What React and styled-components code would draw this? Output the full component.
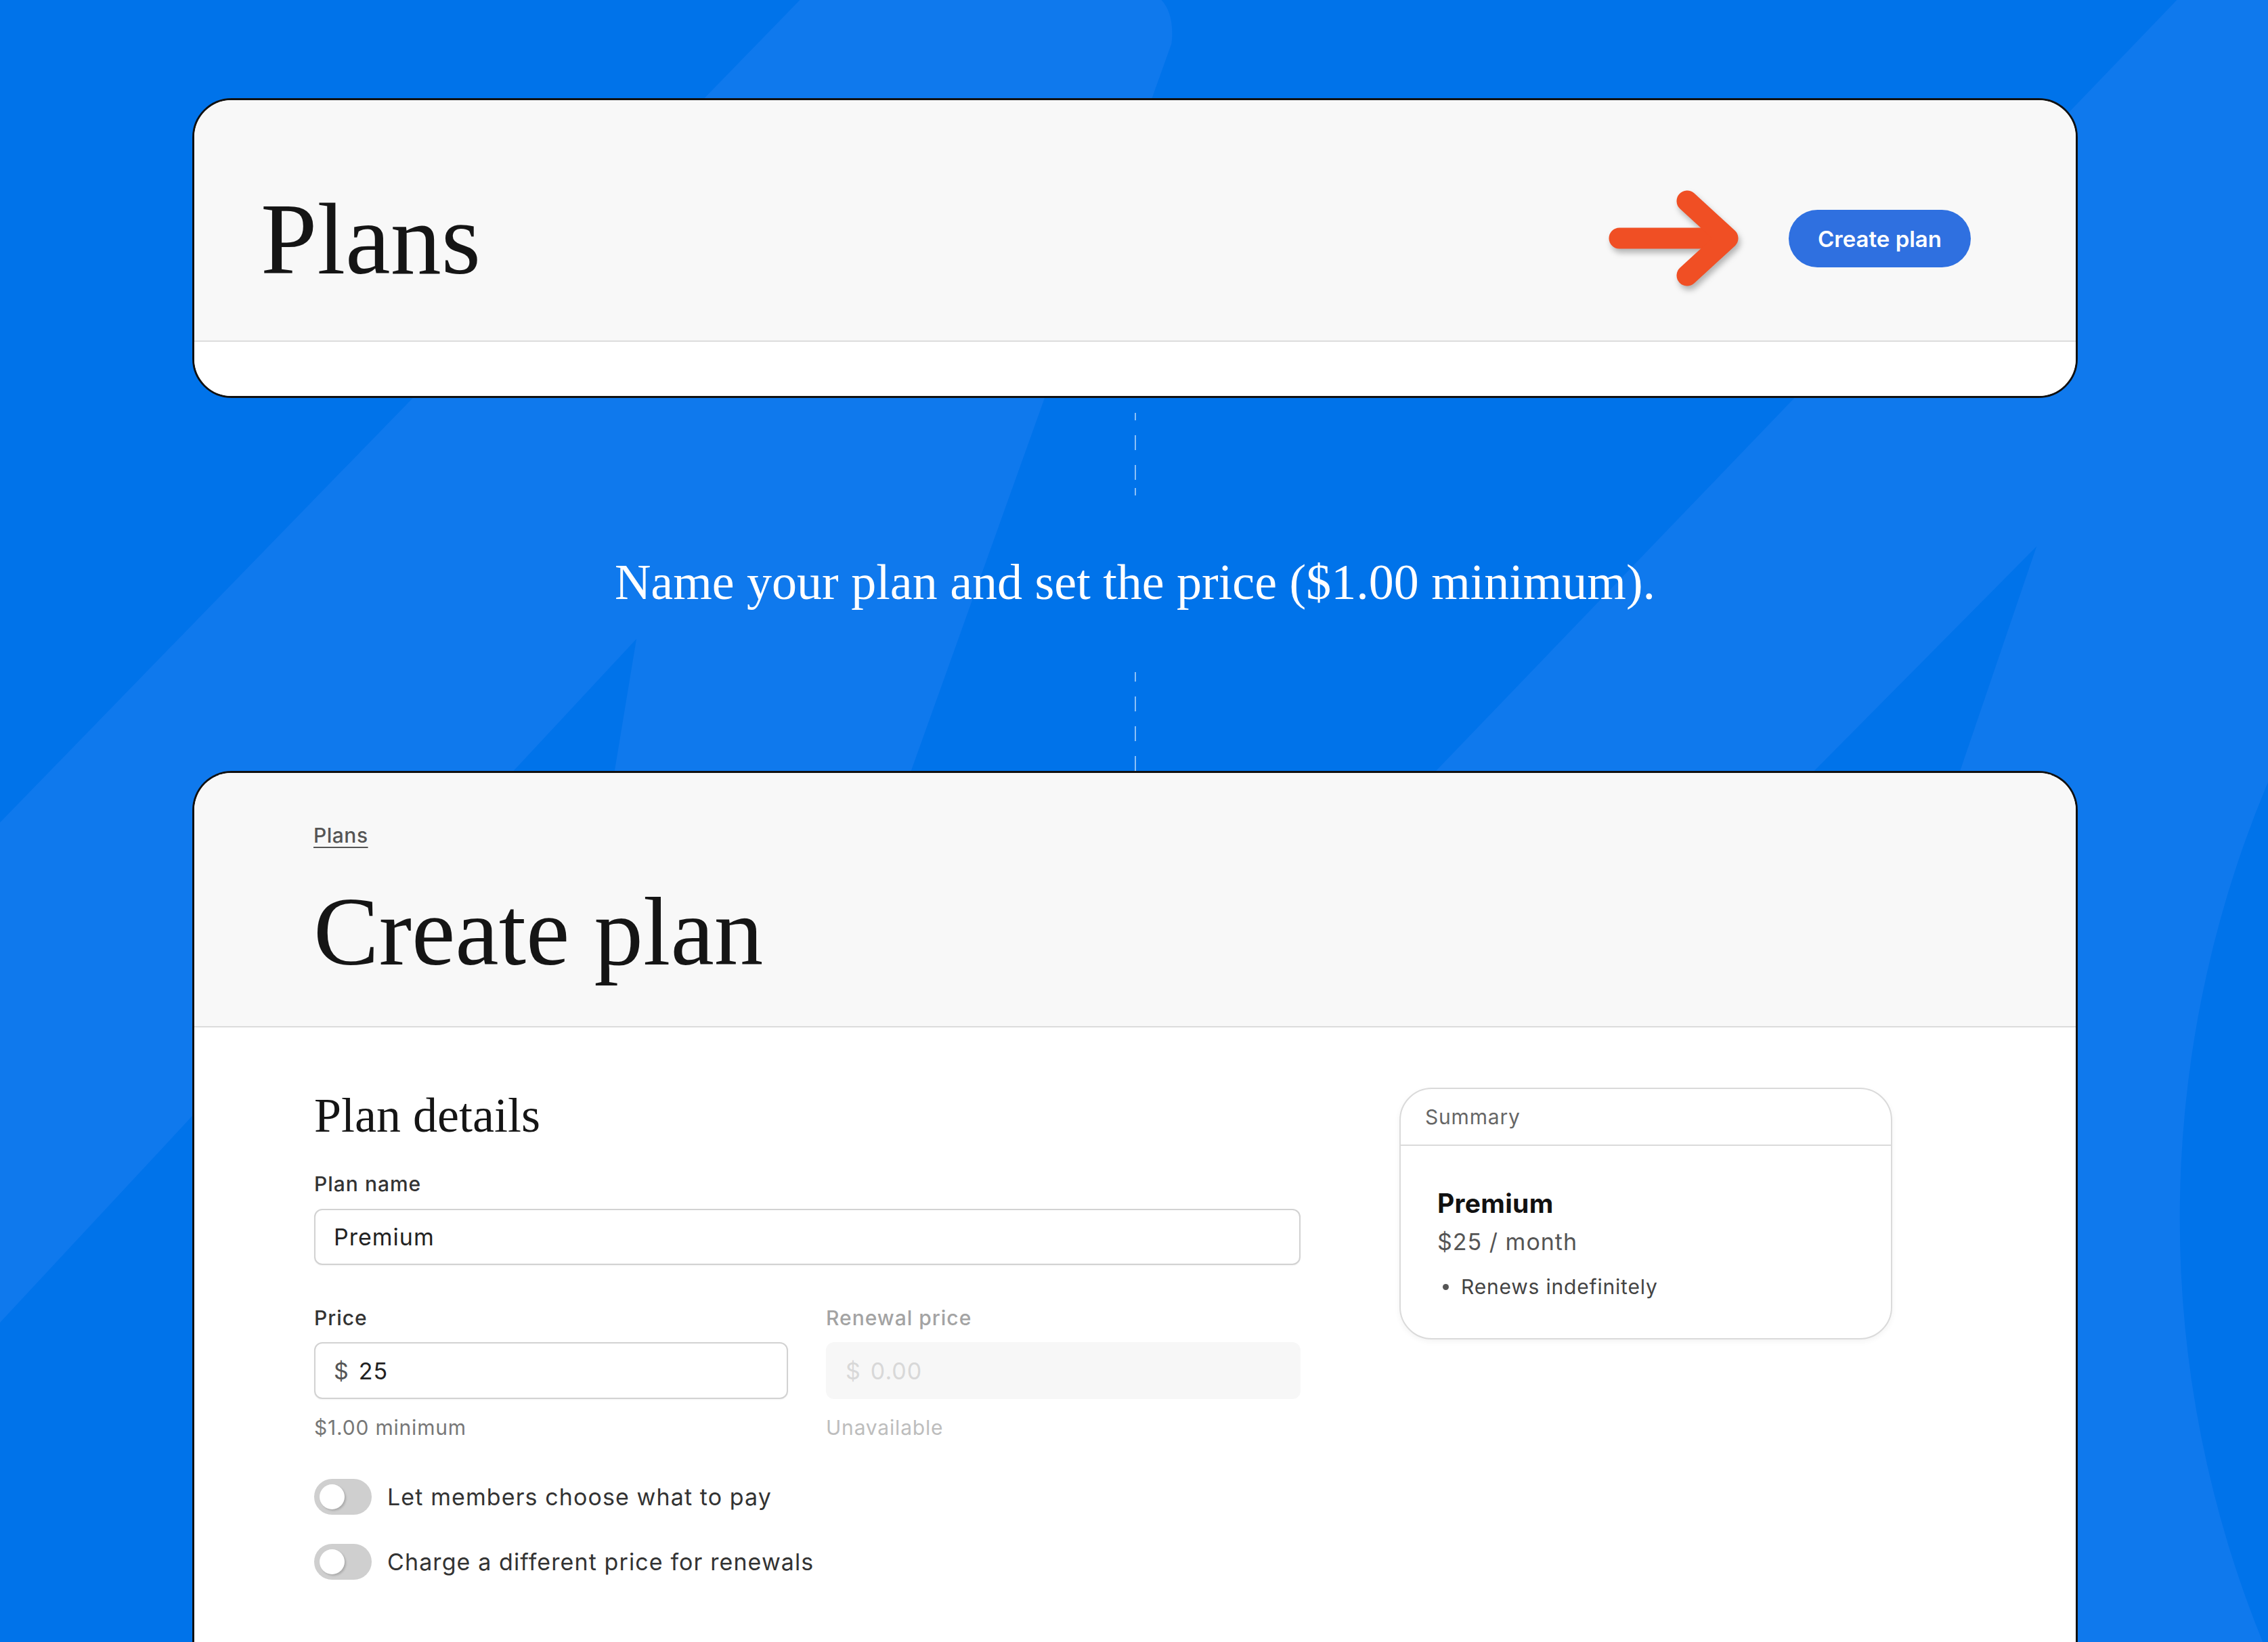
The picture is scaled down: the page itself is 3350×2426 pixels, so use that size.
import React from 'react'
import styled, { createGlobalStyle } from 'styled-components'

const SANS = `Inter, "Liberation Sans", "Noto Sans", sans-serif`
const SERIF = `"Liberation Serif", "DejaVu Serif", serif`

const GlobalStyle = createGlobalStyle`
  html, body {
    margin: 0;
    padding: 0;
  }
  body {
    width: 3350px;
    height: 2426px;
    overflow: hidden;
    background: #0073ea;
  }
  * {
    box-sizing: border-box;
  }
`

const Page = styled.div`
  position: relative;
  width: 3350px;
  height: 2426px;
  overflow: hidden;
  background: #0073ea;
`

const Backdrop = styled.svg`
  position: absolute;
  inset: 0;
  width: 100%;
  height: 100%;
`

const Stage = styled.div`
  position: relative;
  display: flex;
  flex-direction: column;
  align-items: flex-start;
  padding: 145px 0 0 284px;
`

const Card = styled.section`
  width: 2785px;
  background: #fff;
  border: 3px solid #111;
  border-radius: 58px;
  overflow: hidden;
  ${p => p.$open && `
    border-bottom: none;
    border-radius: 58px 58px 0 0;
    height: 1400px;
  `}
`

/* ---------- top card ---------- */

const TopHeader = styled.header`
  height: 357px;
  padding: 54px 155px 0 98px;
  display: flex;
  align-items: center;
  background: #f8f8f8;
  border-bottom: 2px solid #dcdcdc;
`

const PageTitle = styled.h1`
  margin: 0;
  flex: 1;
  font-family: ${SERIF};
  font-weight: 400;
  font-size: ${p => p.$size || 150}px;
  line-height: 1;
  color: #151515;
`

const TopFooter = styled.div`
  height: 80px;
  background: #fff;
`

const Pointer = styled.svg`
  width: 210px;
  height: 160px;
  margin-right: 64px;
  filter: drop-shadow(3px 6px 4px rgba(0, 0, 0, 0.28));
`

const PrimaryButton = styled.button`
  height: 85px;
  padding: 0 43px;
  border: none;
  border-radius: 43px;
  background: #2f70e0;
  color: #fff;
  font-family: ${SANS};
  font-weight: 600;
  font-size: 33px;
  cursor: pointer;
`

/* ---------- connector ---------- */

const Connector = styled.div`
  align-self: stretch;
  width: 2785px;
  height: 551px;
  display: flex;
  flex-direction: column;
  align-items: center;
`

const Dashes = styled.div`
  width: 2px;
  margin-top: ${p => p.$top}px;
  height: ${p => p.$h}px;
  background: repeating-linear-gradient(
    to bottom,
    rgba(255, 255, 255, 0.55) 0 22px,
    transparent 22px 44px
  );
  background-position: 0 ${p => p.$shift}px;
`

const Caption = styled.p`
  margin: 90px 0 0;
  font-family: ${SERIF};
  font-size: 74px;
  line-height: 76px;
  color: #fff;
  white-space: nowrap;
`

/* ---------- create plan card ---------- */

const EditorHeader = styled.header`
  padding: 74px 176px 67px;
  background: #f8f8f8;
  border-bottom: 2px solid #dcdcdc;
`

const Crumb = styled.a`
  display: inline-block;
  font-family: ${SANS};
  font-weight: 500;
  font-size: 30px;
  line-height: 36px;
  letter-spacing: 0.5px;
  color: #555;
  text-decoration: underline;
  text-decoration-thickness: 2px;
  text-underline-offset: 6px;
`

const EditorTitle = styled(PageTitle)`
  margin-top: 52px;
`

const EditorBody = styled.div`
  display: grid;
  grid-template-columns: 1457px 728px;
  column-gap: 146px;
  padding: 95px 0 0 177px;
  align-items: start;
`

const Form = styled.div`
  display: flex;
  flex-direction: column;
`

const SectionTitle = styled.h2`
  margin: 0;
  font-family: ${SERIF};
  font-weight: 400;
  font-size: 72px;
  line-height: 70px;
  color: #151515;
`

const Field = styled.div`
  display: flex;
  flex-direction: column;
  margin-top: ${p => p.$top || 0}px;
`

const Label = styled.label`
  font-family: ${SANS};
  font-weight: 500;
  font-size: 30px;
  line-height: 36px;
  letter-spacing: 1px;
  color: ${p => (p.$muted ? '#a3a3a3' : '#333')};
`

const InputBox = styled.div`
  margin-top: ${p => p.$gap || 19}px;
  height: ${p => p.$h || 83}px;
  display: flex;
  align-items: center;
  gap: 14px;
  padding: 0 27px;
  border-radius: 12px;
  border: 2px solid ${p => (p.$disabled ? '#f7f7f7' : '#d2d2d2')};
  background: ${p => (p.$disabled ? '#f7f7f7' : '#fff')};
  box-shadow: ${p => (p.$disabled ? 'none' : '0 1px 2px rgba(0,0,0,0.05)')};
  font-family: ${SANS};
  font-size: 34px;
  letter-spacing: 1px;
  color: ${p => (p.$disabled ? '#d8d8d8' : '#222')};
`

const Prefix = styled.span`
  color: ${p => (p.$disabled ? '#d8d8d8' : '#555')};
`

const Hint = styled.span`
  margin-top: 24px;
  font-family: ${SANS};
  font-size: 30px;
  line-height: 36px;
  letter-spacing: 0.8px;
  color: ${p => (p.$muted ? '#bdbdbd' : '#777')};
`

const PriceRow = styled.div`
  display: grid;
  grid-template-columns: 700px 701px;
  column-gap: 56px;
  margin-top: 60px;
`

const Toggles = styled.div`
  display: flex;
  flex-direction: column;
  gap: 43px;
  margin-top: 58px;
`

const ToggleRow = styled.div`
  display: flex;
  align-items: center;
  gap: 23px;
  font-family: ${SANS};
  font-size: 34px;
  letter-spacing: 1.1px;
  color: #333;
`

const Switch = styled.span`
  position: relative;
  width: 85px;
  height: 53px;
  border-radius: 27px;
  background: #cfcfcf;
  flex: none;

  &::after {
    content: '';
    position: absolute;
    left: 8px;
    top: 8px;
    width: 37px;
    height: 37px;
    border-radius: 50%;
    background: #fff;
    box-shadow: 2px 2px 3px rgba(0, 0, 0, 0.18);
  }
`

const Summary = styled.aside`
  margin-top: -6px;
  border: 2px solid #dadada;
  border-radius: 48px;
  background: #fff;
  box-shadow: 0 3px 8px rgba(0, 0, 0, 0.05);
  font-family: ${SANS};
  overflow: hidden;
`

const SummaryHead = styled.div`
  height: 84px;
  padding: 0 36px;
  display: flex;
  align-items: center;
  border-bottom: 2px solid #dadada;
  font-size: 30px;
  letter-spacing: 0.8px;
  color: #666;
`

const SummaryBody = styled.div`
  padding: 62px 52px 58px 54px;
`

const PlanName = styled.div`
  font-weight: 700;
  font-size: 39px;
  line-height: 45px;
  letter-spacing: 0.3px;
  color: #111;
`

const PlanPrice = styled.div`
  margin-top: 14px;
  font-size: 34px;
  line-height: 41px;
  letter-spacing: 1px;
  color: #555;
`

const Bullets = styled.ul`
  margin: 28px 0 0;
  padding: 0;
  list-style: none;
`

const Bullet = styled.li`
  display: flex;
  align-items: center;
  gap: 18px;
  padding-left: 8px;
  font-size: 30px;
  line-height: 36px;
  letter-spacing: 0.8px;
  color: #444;

  &::before {
    content: '';
    width: 9px;
    height: 9px;
    border-radius: 50%;
    background: #555;
  }
`

const Background = () => (
  <Backdrop viewBox="0 0 1568 1136" preserveAspectRatio="none">
    <path d="M553 0 L803 0 Q812 10 810 30 L630 533 L430 1136 L0 1136 L0 569 Z" fill="#0f79ed" />
    <path d="M440 442 L425 533 L400 1136 L0 1136 L0 915 Z" fill="#0073ea" />
    <path d="M1505 0 L1568 0 L1568 1136 L414 1136 Z" fill="#0f79ed" />
    <path d="M1408 378 L1150 1136 L658 1136 Z" fill="#0073ea" />
    <circle cx="2284" cy="843" r="777" fill="#0073ea" />
  </Backdrop>
)

const ArrowMark = () => (
  <Pointer viewBox="0 0 210 160">
    <g fill="none" stroke="#f04f24" strokeWidth="31" strokeLinecap="round" strokeLinejoin="round">
      <path d="M24 79 H182" />
      <path d="M124 24 L184 79 L124 134" />
    </g>
  </Pointer>
)

export default function App() {
  return (
    <Page>
      <GlobalStyle />
      <Background />
      <Stage>
        <Card>
          <TopHeader>
            <PageTitle>Plans</PageTitle>
            <ArrowMark />
            <PrimaryButton>Create plan</PrimaryButton>
          </TopHeader>
          <TopFooter />
        </Card>

        <Connector>
          <Dashes $top={22} $h={122} $shift={-11} />
          <Caption>Name your plan and set the price ($1.00 minimum).</Caption>
          <Dashes $top={95} $h={146} $shift={-8} />
        </Connector>

        <Card $open>
          <EditorHeader>
            <Crumb>Plans</Crumb>
            <EditorTitle $size={145}>Create plan</EditorTitle>
          </EditorHeader>
          <EditorBody>
            <Form>
              <SectionTitle>Plan details</SectionTitle>
              <Field $top={48}>
                <Label>Plan name</Label>
                <InputBox>Premium</InputBox>
              </Field>
              <PriceRow>
                <Field>
                  <Label>Price</Label>
                  <InputBox $gap={18} $h={84}>
                    <Prefix>$</Prefix>
                    <span>25</span>
                  </InputBox>
                  <Hint>$1.00 minimum</Hint>
                </Field>
                <Field>
                  <Label $muted>Renewal price</Label>
                  <InputBox $gap={18} $h={84} $disabled>
                    <Prefix $disabled>$</Prefix>
                    <span>0.00</span>
                  </InputBox>
                  <Hint $muted>Unavailable</Hint>
                </Field>
              </PriceRow>
              <Toggles>
                <ToggleRow>
                  <Switch />
                  Let members choose what to pay
                </ToggleRow>
                <ToggleRow>
                  <Switch />
                  Charge a different price for renewals
                </ToggleRow>
              </Toggles>
            </Form>

            <Summary>
              <SummaryHead>Summary</SummaryHead>
              <SummaryBody>
                <PlanName>Premium</PlanName>
                <PlanPrice>$25 / month</PlanPrice>
                <Bullets>
                  <Bullet>Renews indefinitely</Bullet>
                </Bullets>
              </SummaryBody>
            </Summary>
          </EditorBody>
        </Card>
      </Stage>
    </Page>
  )
}
